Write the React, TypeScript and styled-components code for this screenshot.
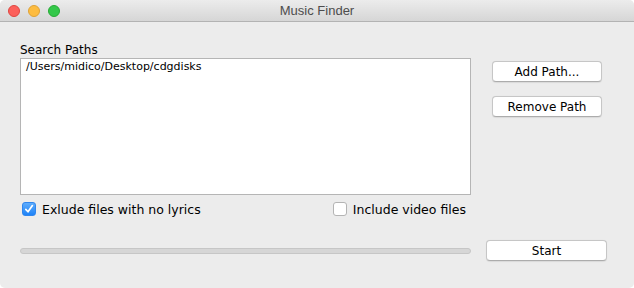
import React from "react";
import styled, { createGlobalStyle } from "styled-components";

const GlobalStyle = createGlobalStyle`
    html, body {
        margin: 0;
        padding: 0;
        background: #ffffff;
    }
    * {
        box-sizing: border-box;
    }
`

const Window = styled.div`
    width: 634px;
    height: 288px;
    display: flex;
    flex-direction: column;
    background: #ececec;
    border-radius: 5px;
    overflow: hidden;
    font-family: "DejaVu Sans", "Liberation Sans", sans-serif;
    color: #000000;
`

const TitleBar = styled.div`
    position: relative;
    height: 22px;
    flex-shrink: 0;
    display: flex;
    align-items: center;
    justify-content: center;
    background: linear-gradient(#ececec, #d6d6d6);
    border-bottom: 1px solid #b3b3b3;
    font-family: "Liberation Sans", Arial, sans-serif;
    font-size: 13px;
    color: #4d4d4d;
`

const Lights = styled.div`
    position: absolute;
    left: 8px;
    top: 5px;
    display: flex;
    gap: 8px;
`

const Light = styled.span<{ $fill: string; $edge: string }>`
    width: 12px;
    height: 12px;
    border-radius: 50%;
    background: ${p => p.$fill};
    border: 0.5px solid ${p => p.$edge};
`

const Content = styled.div`
    padding: 21px 0 0 20px;
    display: flex;
    flex-direction: column;
`

const TopRow = styled.div`
    display: flex;
`

const LeftColumn = styled.div`
    width: 451px;
    display: flex;
    flex-direction: column;
`

const Label = styled.div`
    height: 15px;
    font-size: 12px;
    line-height: 15px;
`

const PathList = styled.div`
    height: 137px;
    background: #ffffff;
    border: 1px solid #b5b5b5;
    padding: 1px 5px;
    font-size: 11px;
    line-height: 14px;
`

const RightColumn = styled.div`
    padding: 18px 0 0 21px;
    display: flex;
    flex-direction: column;
    gap: 14px;
`

const Button = styled.button<{ $width: number }>`
    width: ${p => p.$width}px;
    height: 21px;
    padding: 0;
    background: #ffffff;
    border: 1px solid #c6c6c6;
    border-bottom-color: #acacac;
    border-radius: 4px;
    box-shadow: 0 0.5px 1px rgba(0, 0, 0, 0.08);
    font-family: "DejaVu Sans", "Liberation Sans", sans-serif;
    font-size: 12px;
    color: #000000;
`

const CheckRow = styled.div`
    width: 451px;
    margin-top: 6px;
    padding: 0 5px 0 2px;
    display: flex;
    justify-content: space-between;
`

const Check = styled.label`
    display: flex;
    align-items: center;
    gap: 6px;
    height: 16px;
    font-size: 12.5px;
`

const Box = styled.span<{ $on?: boolean }>`
    width: 14px;
    height: 14px;
    border-radius: 3px;
    display: flex;
    align-items: center;
    justify-content: center;
    background: ${p => (p.$on ? "linear-gradient(#5fadfc, #1e83f7)" : "#ffffff")};
    border: 1px solid ${p => (p.$on ? "#2f86ee" : "#b4b4b4")};
`

const BottomRow = styled.div`
    margin-top: 23px;
    display: flex;
    align-items: center;
    gap: 15px;
`

const Progress = styled.div`
    width: 451px;
    height: 6px;
    border-radius: 3px;
    background: #d6d6d6;
    border: 1px solid #c6c6c6;
`

const Tick = () => (
    <svg width="10" height="10" viewBox="0 0 10 10">
        <path d="M1.8 5.4 L4 7.8 L8.4 1.6" fill="none" stroke="#ffffff" strokeWidth="1.7" strokeLinecap="round" strokeLinejoin="round" />
    </svg>
)

export default function App() {
    return (
        <>
            <GlobalStyle />
            <Window>
                <TitleBar>
                    <Lights>
                        <Light $fill="#fc605b" $edge="#de4640" />
                        <Light $fill="#fdbc40" $edge="#dea236" />
                        <Light $fill="#34c84a" $edge="#27aa35" />
                    </Lights>
                    Music Finder
                </TitleBar>
                <Content>
                    <TopRow>
                        <LeftColumn>
                            <Label>Search Paths</Label>
                            <PathList>/Users/midico/Desktop/cdgdisks</PathList>
                        </LeftColumn>
                        <RightColumn>
                            <Button $width={110}>Add Path...</Button>
                            <Button $width={110}>Remove Path</Button>
                        </RightColumn>
                    </TopRow>
                    <CheckRow>
                        <Check>
                            <Box $on><Tick /></Box>
                            Exlude files with no lyrics
                        </Check>
                        <Check>
                            <Box />
                            Include video files
                        </Check>
                    </CheckRow>
                    <BottomRow>
                        <Progress />
                        <Button $width={121}>Start</Button>
                    </BottomRow>
                </Content>
            </Window>
        </>
    )
}
